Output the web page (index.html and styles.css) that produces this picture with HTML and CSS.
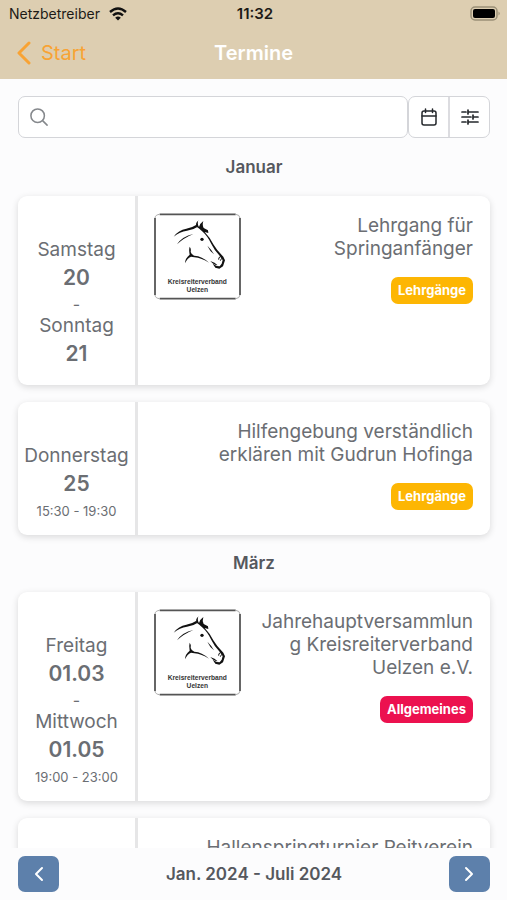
FILE: index.html
```html
<!DOCTYPE html>
<html lang="de">
<head>
<meta charset="utf-8">
<meta name="viewport" content="width=device-width, initial-scale=1">
<title>Termine</title>
<link rel="stylesheet" href="styles.css">
</head>
<body>
<svg class="sprite" aria-hidden="true">
  <symbol id="horse" viewBox="27 36 261 261">
    <rect x="30" y="39" width="255" height="255" rx="14" fill="#fff"/>
    <path d="M44 40H272M44 293H272" stroke="#555" stroke-width="5"/>
    <path d="M30 51V282M285 51V282" stroke="#666" stroke-width="6"/>
    <path d="M30 51Q31 41 44 40M272 40Q284 41 285 51M30 282Q31 292 44 293M272 293Q284 292 285 282" fill="none" stroke="#aaa" stroke-width="3"/>
    <g fill="#111">
      <path d="M86 107Q100 87 124 83Q142 80 153 72L157 78Q145 87 126 89Q104 92 86 107Z"/>
      <path d="M96 130Q112 106 145 99Q116 111 96 130Z"/>
      <path d="M153 76Q152 65 160 58Q156 70 162 78Q165 67 175 60Q171 72 176 81L189 88L190 96L179 93Q194 108 205 130Q216 149 235 167L240 178L234 196L223 203L211 200L203 188L215 195L224 196L230 188L233 177L222 162Q207 146 199 129Q188 105 173 92L163 83Z"/>
      <path d="M134 137Q139 142 137 153Q139 161 148 164Q171 165 192 185Q170 171 148 169L138 167Q126 172 120 187Q120 172 134 161Q131 147 134 137Z"/>
      <path d="M187 134Q198 144 207 160Q194 150 187 134Z"/>
      <path d="M196 180Q210 184 218 193Q208 193 196 180Z"/>
      <circle cx="171" cy="115" r="5"/>
    </g>
    <path d="M221 176Q220 168 227 167M226 179L230 172" fill="none" stroke="#111" stroke-width="3"/>
  </symbol>
</svg>

<header class="header">
  <div class="status">
    <div class="carrier">
      <span>Netzbetreiber</span>
      <svg class="wifi" viewBox="0 0 18 14" fill="none" stroke="#111" stroke-width="2.4" aria-hidden="true">
        <path d="M1 5Q9 -2 17 5M4 8.300Q9 4 14 8.300"/>
        <path d="M9 13.500L6.200 10.700Q9 8.500 11.800 10.700Z" fill="#111" stroke="none"/>
      </svg>
    </div>
    <span class="clock">11:32</span>
    <svg class="battery" viewBox="0 0 31 15" aria-hidden="true">
      <rect x="1" y="1" width="26" height="13" rx="4" fill="none" stroke="#9a9077" stroke-width="1.500"/>
      <rect x="3" y="3" width="22" height="9" rx="2" fill="#000"/>
      <path d="M28.500 5.500Q31 7.500 28.500 9.500Z" fill="#9a9077"/>
    </svg>
  </div>
  <nav class="nav">
    <a class="back" href="#start">
      <svg class="back-icon" viewBox="0 0 14 24" fill="none" stroke="currentColor" stroke-width="3" stroke-linecap="round" stroke-linejoin="round" aria-hidden="true"><path d="M12 2L2 12L12 22"/></svg>
      <span>Start</span>
    </a>
    <h1 class="title">Termine</h1>
  </nav>
</header>

<form class="toolbar">
  <label class="search">
    <svg class="search-icon" viewBox="0 0 20 20" fill="none" stroke="#85888c" stroke-width="1.700" stroke-linecap="round" aria-hidden="true"><circle cx="8.500" cy="8.500" r="7.500"/><path d="M14 14L19 19"/></svg>
    <input class="search-input" type="search" aria-label="Suche">
  </label>
  <div class="actions">
    <button class="action" type="button" aria-label="Kalender">
      <svg class="action-icon" viewBox="0 0 18 20" fill="none" stroke="#25282c" stroke-width="1.500" stroke-linecap="round" aria-hidden="true"><rect x="2" y="4" width="14" height="14" rx="2"/><path d="M2 9H16M5.500 2V5.500M12.500 2V5.500"/></svg>
    </button>
    <button class="action" type="button" aria-label="Filter">
      <svg class="action-icon" viewBox="0 0 18 20" fill="none" stroke="#25282c" stroke-width="1.700" stroke-linecap="round" aria-hidden="true"><path d="M1 5H5M7.500 5H17M1 10H10M12.500 10H17M1 15H5M7.500 15H17M7 3V7M12 8V12M7 13V17"/></svg>
    </button>
  </div>
</form>

<main class="list">
  <h2 class="month">Januar</h2>
  <div class="cards">
    <article class="card">
      <div class="date">
        <span>Samstag</span><strong class="day">20</strong>
        <span class="dash">-</span>
        <span>Sonntag</span><strong class="day">21</strong>
      </div>
      <div class="body">
        <svg class="crest" viewBox="0 0 261 261" role="img" aria-label="Kreisreiterverband Uelzen">
          <use href="#horse" width="261" height="261"/>
          <text x="130" y="214">Kreisreiterverband</text>
          <text x="130" y="237">Uelzen</text>
        </svg>
        <div class="info">
          <h3 class="name">Lehrgang für Springanfänger</h3>
          <span class="tag">Lehrgänge</span>
        </div>
      </div>
    </article>
    <article class="card">
      <div class="date">
        <span>Donnerstag</span><strong class="day">25</strong>
        <span class="time">15:30 - 19:30</span>
      </div>
      <div class="body">
        <div class="info">
          <h3 class="name">Hilfengebung verständlich erklären mit Gudrun Hofinga</h3>
          <span class="tag">Lehrgänge</span>
        </div>
      </div>
    </article>
  </div>
  <h2 class="month">März</h2>
  <div class="cards">
    <article class="card">
      <div class="date">
        <span>Freitag</span><strong class="day">01.03</strong>
        <span class="dash">-</span>
        <span>Mittwoch</span><strong class="day">01.05</strong>
        <span class="time">19:00 - 23:00</span>
      </div>
      <div class="body">
        <svg class="crest" viewBox="0 0 261 261" role="img" aria-label="Kreisreiterverband Uelzen">
          <use href="#horse" width="261" height="261"/>
          <text x="130" y="214">Kreisreiterverband</text>
          <text x="130" y="237">Uelzen</text>
        </svg>
        <div class="info">
          <h3 class="name">Jahrehauptversammlung Kreisreiterverband Uelzen e.V.</h3>
          <span class="tag tag-general">Allgemeines</span>
        </div>
      </div>
    </article>
    <article class="card">
      <div class="date"></div>
      <div class="body">
        <div class="info">
          <h3 class="name">Hallenspringturnier Reitverein</h3>
        </div>
      </div>
    </article>
  </div>
</main>

<footer class="pager">
  <button class="page-button" type="button" aria-label="Zurück"><svg class="page-icon" viewBox="0 0 10 16" fill="none" stroke="#fff" stroke-width="2" stroke-linecap="round" stroke-linejoin="round" aria-hidden="true"><path d="M8 2L2 8L8 14"/></svg></button>
  <span class="range">Jan. 2024 - Juli 2024</span>
  <button class="page-button" type="button" aria-label="Weiter"><svg class="page-icon" viewBox="0 0 10 16" fill="none" stroke="#fff" stroke-width="2" stroke-linecap="round" stroke-linejoin="round" aria-hidden="true"><path d="M2 2L8 8L2 14"/></svg></button>
</footer>
</body>
</html>
```
FILE: styles.css
```css
* {
  box-sizing: border-box;
}

body {
  margin: 0;
  height: 100vh;
  display: flex;
  flex-direction: column;
  overflow: hidden;
  background: #fcfcfd;
  color: #6b6e73;
  font-family: Inter, "Liberation Sans", sans-serif;
  font-size: 19px;
  line-height: 23px;
}

h1,
h2,
h3 {
  margin: 0;
}

button {
  padding: 0;
  border: 0;
  display: flex;
  align-items: center;
  justify-content: center;
}

.sprite {
  position: absolute;
  width: 0;
  height: 0;
}

.header {
  flex: none;
  background: #ddceb1;
}

.status,
.nav {
  display: grid;
  grid-template-columns: 1fr auto 1fr;
  align-items: center;
}

.status {
  height: 27px;
  padding: 0 6px 0 9px;
  color: #1c1a16;
  font-size: 14px;
}

.carrier {
  display: flex;
  align-items: center;
  gap: 9px;
}

.wifi {
  width: 18px;
  height: 14px;
}

.clock {
  font-size: 15px;
  font-weight: 600;
}

.battery {
  width: 31px;
  height: 15px;
  justify-self: end;
}

.nav {
  height: 52px;
  padding: 0 17px;
  font-size: 20px;
}

.back {
  display: flex;
  align-items: center;
  gap: 10px;
  color: #f8a334;
  text-decoration: none;
}

.back-icon {
  width: 14px;
  height: 24px;
}

.title {
  color: #fff;
  font-size: 20px;
  font-weight: 600;
}

.toolbar {
  flex: none;
  display: flex;
  padding: 17px 17px 0 18px;
}

.search {
  flex: 1;
  display: flex;
  align-items: center;
  gap: 10px;
  height: 42px;
  padding: 0 11px;
  border: 1px solid #d4d5d9;
  border-radius: 7px;
  background: #fff;
}

.search-icon {
  width: 18px;
  height: 18px;
}

.search-input {
  flex: 1;
  min-width: 0;
  border: 0;
  outline: 0;
  background: none;
  font: inherit;
  color: inherit;
}

.actions {
  display: flex;
  border: 1px solid #d4d5d9;
  border-radius: 7px;
  background: #fff;
}

.action {
  width: 39px;
  background: none;
}

.action + .action {
  width: 41px;
  border-left: 2px solid #dcdce0;
}

.action-icon {
  width: 18px;
  height: 20px;
}

.list {
  flex: 1;
  min-height: 0;
  overflow: hidden;
  padding: 1px 17px 0 18px;
}

.month {
  padding-bottom: 1px;
  color: #55585e;
  font-size: 17px;
  font-weight: 600;
  line-height: 56px;
  text-align: center;
}

.cards {
  display: flex;
  flex-direction: column;
  gap: 17px;
}

.card {
  display: flex;
  min-height: 133px;
  border-radius: 9px;
  background: #fff;
  box-shadow: 0 2px 7px rgba(0, 0, 0, 0.14);
}

.date {
  flex: none;
  width: 120px;
  display: flex;
  flex-direction: column;
  padding: 42px 0 14px;
  border-right: 3px solid #e6e6e7;
  text-align: center;
}

.day {
  font-size: 21px;
  font-weight: 600;
  line-height: 34px;
}

.dash {
  font-size: 16px;
  line-height: 19px;
}

.time {
  font-size: 13px;
  line-height: 20px;
}

.body {
  flex: 1;
  min-width: 0;
  display: flex;
  gap: 17px;
  padding: 17px 17px 17px 16px;
}

.crest {
  flex: none;
  width: 87px;
  height: 87px;
  fill: #333;
  font-family: "Liberation Sans", sans-serif;
  font-size: 20px;
  font-weight: 700;
  text-anchor: middle;
}

.info {
  flex: 1;
  min-width: 0;
  max-width: 85%;
  margin-left: auto;
  padding-top: 1px;
  display: flex;
  flex-direction: column;
  align-items: flex-end;
  gap: 17px;
  text-align: right;
}

.name {
  max-width: 100%;
  font-size: 19px;
  font-weight: 400;
  overflow-wrap: anywhere;
}

.tag {
  padding: 0 7px;
  border-radius: 7px;
  background: #fdb603;
  color: #fff;
  font-size: 13px;
  font-weight: 700;
  line-height: 27px;
}

.tag-general {
  background: #ec114f;
}

.pager {
  flex: none;
  height: 52px;
  display: flex;
  align-items: center;
  justify-content: space-between;
  padding: 0 17px 0 18px;
}

.range {
  color: #55585e;
  font-size: 17px;
  font-weight: 600;
}

.page-button {
  width: 41px;
  height: 36px;
  border-radius: 7px;
  background: #5d80ab;
}

.page-icon {
  width: 10px;
  height: 16px;
}
```
